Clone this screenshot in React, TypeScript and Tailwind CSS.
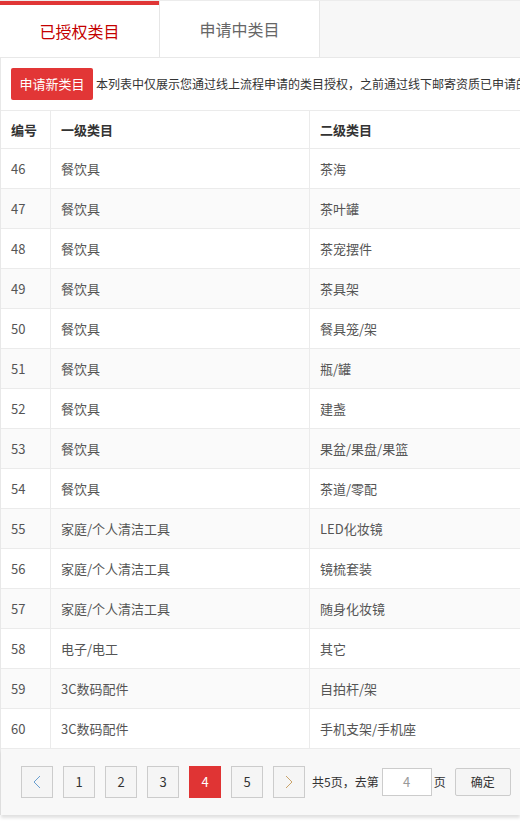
import React from 'react';

const rows = [
  { id: 46, a: '餐饮具', b: '茶海' },
  { id: 47, a: '餐饮具', b: '茶叶罐' },
  { id: 48, a: '餐饮具', b: '茶宠摆件' },
  { id: 49, a: '餐饮具', b: '茶具架' },
  { id: 50, a: '餐饮具', b: '餐具笼/架' },
  { id: 51, a: '餐饮具', b: '瓶/罐' },
  { id: 52, a: '餐饮具', b: '建盏' },
  { id: 53, a: '餐饮具', b: '果盆/果盘/果篮' },
  { id: 54, a: '餐饮具', b: '茶道/零配' },
  { id: 55, a: '家庭/个人清洁工具', b: 'LED化妆镜' },
  { id: 56, a: '家庭/个人清洁工具', b: '镜梳套装' },
  { id: 57, a: '家庭/个人清洁工具', b: '随身化妆镜' },
  { id: 58, a: '电子/电工', b: '其它' },
  { id: 59, a: '3C数码配件', b: '自拍杆/架' },
  { id: 60, a: '3C数码配件', b: '手机支架/手机座' },
];

const font = { fontFamily: '"Noto Sans CJK SC", "Liberation Sans", sans-serif' };

const App: React.FC = () => {
  return (
    <div className="w-[520px] h-[823px] overflow-hidden bg-white text-[#333]" style={font}>
      {/* tabs */}
      <div className="flex h-[57px] bg-[#f7f7f7] border-t border-[#ececec]">
        <div className="w-[159px] bg-white flex flex-col">
          <div className="h-[4px] bg-[#e03636]" />
          <div className="flex-1 flex items-center justify-center text-[16px] text-[#c40000]">已授权类目</div>
        </div>
        <div className="w-[161px] bg-white border-l border-r border-[#e6e6e6] flex items-center justify-center text-[16px] text-[#666]">
          申请中类目
        </div>
      </div>

      <div className="border-t border-l border-[#e8e8e8]">
        {/* toolbar */}
        <div className="flex items-center h-[52px] pl-[10px] whitespace-nowrap">
          <button className="h-[32px] w-[82px] shrink-0 rounded-[2px] bg-[#e23636] text-white text-[13px]">申请新类目</button>
          <span className="ml-[3px] text-[12px] text-[#333]">
            本列表中仅展示您通过线上流程申请的类目授权，之前通过线下邮寄资质已申请的类目请在类目管理中查看
          </span>
        </div>

        {/* table */}
        <div className="w-[800px]">
          <div className="grid grid-cols-[50px_259px_491px] h-[39px] border-t border-b border-[#ebebeb] text-[13px] font-bold text-[#333]">
            <div className="flex items-center pl-[10px] border-r border-[#ebebeb]">编号</div>
            <div className="flex items-center pl-[10px] border-r border-[#ebebeb]">一级类目</div>
            <div className="flex items-center pl-[10px]">二级类目</div>
          </div>
          {rows.map((r, i) => (
            <div
              key={r.id}
              className={`grid grid-cols-[50px_259px_491px] h-[40px] border-b border-[#ebebeb] text-[13px] text-[#555] ${i % 2 === 1 ? 'bg-[#fafafa]' : 'bg-white'}`}
            >
              <div className="flex items-center pl-[10px] border-r border-[#ebebeb]">{r.id}</div>
              <div className="flex items-center pl-[10px] border-r border-[#ebebeb]">{r.a}</div>
              <div className="flex items-center pl-[10px]">{r.b}</div>
            </div>
          ))}
        </div>

        {/* pagination */}
        <div className="h-[66px] bg-[#f8f8f8] flex items-center pl-[20px] text-[13px] shadow-[0_3px_3px_rgba(0,0,0,0.12)]">
          <div className="flex items-center gap-[10px]">
            <button className="w-[32px] h-[32px] border border-[#ccc] bg-[#f5f5f5] flex items-center justify-center">
              <svg width="10" height="14" viewBox="0 0 10 14" fill="none" stroke="#6a9fd0" strokeWidth="1">
                <path d="M8 1 L2 7 L8 13" />
              </svg>
            </button>
            {[1, 2, 3, 4, 5].map(n => (
              <button
                key={n}
                className={`w-[32px] h-[32px] flex items-center justify-center text-[13px] ${n === 4 ? 'bg-[#e03434] text-white' : 'border border-[#ccc] bg-[#f5f5f5] text-[#333]'}`}
              >
                {n}
              </button>
            ))}
            <button className="w-[32px] h-[32px] border border-[#ccc] bg-[#f5f5f5] flex items-center justify-center">
              <svg width="10" height="14" viewBox="0 0 10 14" fill="none" stroke="#c9a36a" strokeWidth="1">
                <path d="M2 1 L8 7 L2 13" />
              </svg>
            </button>
          </div>
          <span className="ml-[7px] text-[12px] text-[#333] whitespace-nowrap">共5页，去第</span>
          <div className="ml-[3px] w-[50px] h-[28px] bg-white border border-[#ccc] flex items-center justify-center text-[#999] text-[13px]">4</div>
          <span className="ml-[2px] text-[12px]">页</span>
          <button className="ml-[9px] w-[56px] h-[28px] rounded-[2px] border border-[#ccc] bg-[#f5f5f5] text-[12px] text-[#333]">确定</button>
        </div>
      </div>
    </div>
  );
};

export default App;
